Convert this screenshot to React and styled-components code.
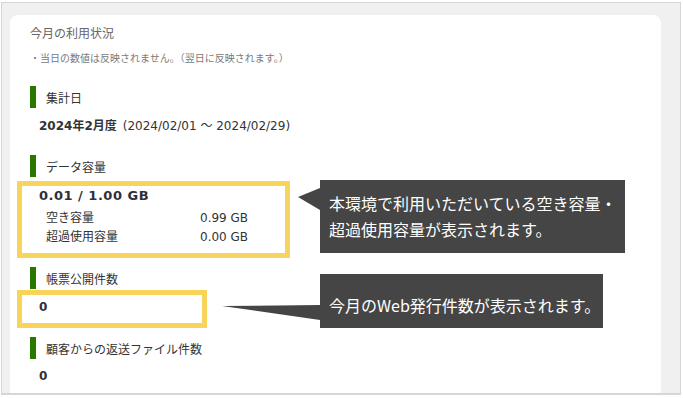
import React from "react";
import styled, { createGlobalStyle } from "styled-components";

const GlobalStyle = createGlobalStyle`
  body {
    margin: 0;
    background: #ffffff;
    font-family: "DejaVu Sans", "Noto Sans CJK JP", sans-serif;
  }
`;

const Frame = styled.div`
  box-sizing: border-box;
  width: 680px;
  height: 393px;
  margin: 2px 0 0 1px;
  border: 1px solid #d6d6d6;
  border-bottom-width: 2px;
  background: #eff0ef;
  padding: 12px 19px 0 8px;
  overflow: hidden;
`;

const Card = styled.div`
  position: relative;
  background: #ffffff;
  border-radius: 8px 8px 0 0;
  height: 100%;
  padding: 10px 0 0 20px;
  box-sizing: border-box;
`;

const Title = styled.div`
  font-size: 12px;
  line-height: 18px;
  color: #666666;
`;

const Note = styled.div`
  margin-top: 8px;
  font-size: 10px;
  line-height: 16px;
  color: #7a7a7a;
`;

const Heading = styled.div`
  display: flex;
  align-items: center;
  gap: 10px;
  margin-top: ${(p) => p.$top}px;
  font-size: 12px;
  color: #333333;

  &::before {
    content: "";
    display: block;
    width: 6px;
    height: 22px;
    background: #287800;
  }
`;

const Value = styled.div`
  margin-top: ${(p) => p.$top || 0}px;
  padding-left: 9px;
  font-size: 12px;
  line-height: 18px;
  color: #333333;

  b {
    font-weight: bold;
    margin-right: 6px;
  }
`;

const Highlight = styled.div`
  box-sizing: border-box;
  width: ${(p) => p.$width}px;
  margin: ${(p) => p.$top}px 0 0 -13px;
  border: 5px solid #f8d45a;
  padding: ${(p) => p.$pad};
`;

const Big = styled.div`
  font-size: 13px;
  font-weight: bold;
  letter-spacing: 0.5px;
  line-height: 18px;
  color: #2f2f3a;
`;

const Count = styled.div`
  font-size: 12px;
  font-weight: bold;
  line-height: 18px;
  color: #2f2f3a;
`;

const UsageTable = styled.div`
  display: grid;
  grid-template-columns: 154px auto;
  margin: 4px 0 0 7px;
  font-size: 12px;
  line-height: 19px;
  color: #333333;
`;

const Callout = styled.div`
  position: absolute;
  left: 310px;
  top: ${(p) => p.$top}px;
  width: ${(p) => p.$width}px;
  box-sizing: border-box;
  padding: ${(p) => p.$pad};
  background: #454545;
  color: #ffffff;
  font-family: "Noto Sans CJK JP", sans-serif;
  font-size: 16px;
  line-height: 26px;
  white-space: nowrap;

  svg {
    position: absolute;
    top: 0;
    overflow: visible;
  }
`;

export default function App() {
  return (
    <>
      <GlobalStyle />
      <Frame>
        <Card>
          <Title>今月の利用状況</Title>
          <Note>・当日の数値は反映されません。（翌日に反映されます。）</Note>

          <Heading $top={19}>集計日</Heading>
          <Value $top={9}>
            <b>2024年2月度</b>(2024/02/01 ～ 2024/02/29)
          </Value>

          <Heading $top={20}>データ容量</Heading>
          <Highlight $width={273} $top={4} $pad="1px 0 6px 17px">
            <Big>0.01 / 1.00 GB</Big>
            <UsageTable>
              <span>空き容量</span>
              <span>0.99 GB</span>
              <span>超過使用容量</span>
              <span>0.00 GB</span>
            </UsageTable>
          </Highlight>

          <Heading $top={9}>帳票公開件数</Heading>
          <Highlight $width={190} $top={1} $pad="3px 0 7px 17px">
            <Count>0</Count>
          </Highlight>

          <Heading $top={9}>顧客からの返送ファイル件数</Heading>
          <Value $top={8}>
            <Count>0</Count>
          </Value>

          <Callout $top={165} $width={305} $pad="10px 0 11px 9px">
            <svg width="22" height="40" style={{ left: -22 }}>
              <polygon points="22,8 0,17 22,30" fill="#454545" />
            </svg>
            本環境で利用いただいている空き容量・
            <br />
            超過使用容量が表示されます。
          </Callout>

          <Callout $top={259} $width={283} $pad="18px 0 10px 9px">
            <svg width="98" height="50" style={{ left: -98 }}>
              <polygon points="98,31 0,32 98,46" fill="#454545" />
            </svg>
            今月のWeb発行件数が表示されます。
          </Callout>
        </Card>
      </Frame>
    </>
  );
}
